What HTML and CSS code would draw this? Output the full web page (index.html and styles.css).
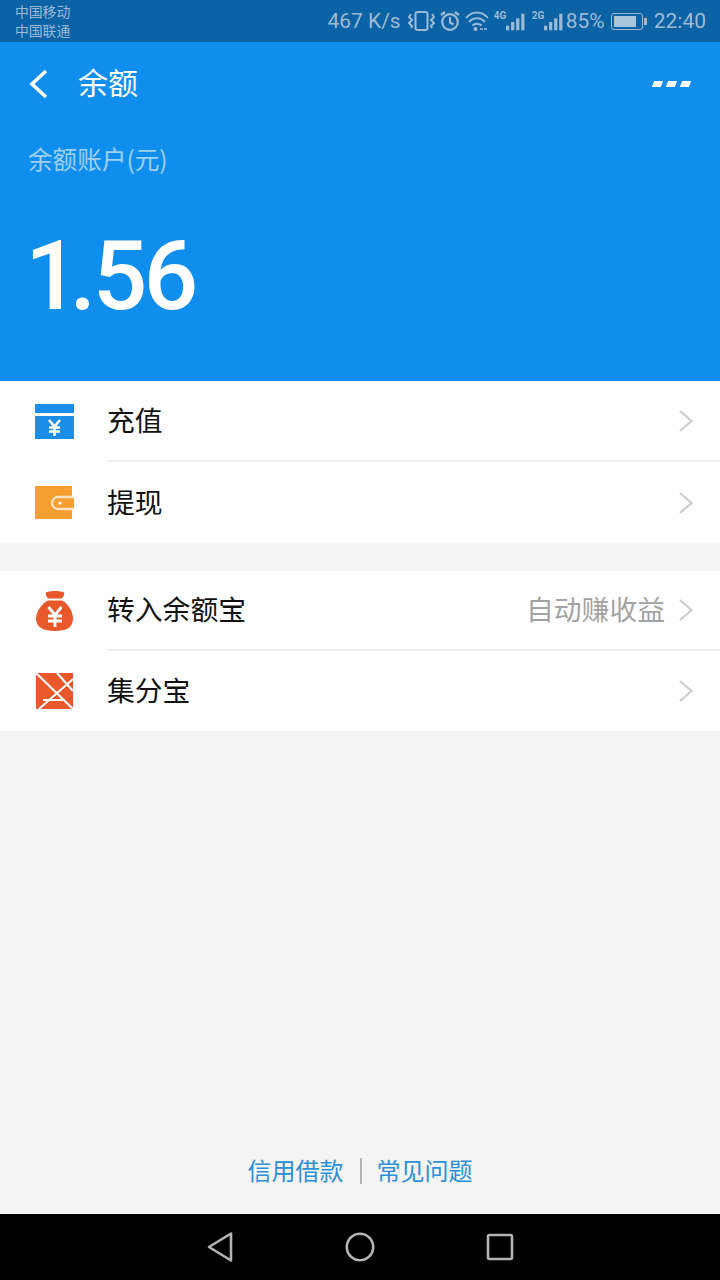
FILE: index.html
```html
<!DOCTYPE html>
<html lang="zh">
<head>
    <meta charset="UTF-8">
    <title>余额</title>
    <link rel="stylesheet" href="styles.css">
</head>
<body>
    <div class="screen">
        <div class="status-bar">
            <div class="carriers">
                <span>中国移动</span>
                <span>中国联通</span>
            </div>
            <div class="status-right">
                <span class="speed">467 K/s</span>
                <svg class="st-vibrate" width="27" height="22" viewBox="0 0 27 22" fill="none" stroke="#9dbbd6" stroke-width="2">
                    <rect x="7.500" y="2" width="12" height="18" rx="2"/>
                    <path d="M3 4L1 7l3 3-3 3 3 3-1 2M24 4l2 3-3 3 3 3-3 3 1 2"/>
                </svg>
                <svg class="st-alarm" width="22" height="22" viewBox="0 0 22 22" fill="none" stroke="#9dbbd6" stroke-width="2.200">
                    <circle cx="11" cy="12" r="7.800"/>
                    <path d="M11 7v5.500l3.500 2M2 5l4-3M20 5l-4-3"/>
                </svg>
                <svg class="st-wifi" width="24" height="22" viewBox="0 0 24 22" fill="none" stroke="#9dbbd6" stroke-width="2">
                    <path d="M1 8c6-7.500 16-7.500 22 0M4 12c4.500-5 11.500-5 16 0M7.500 15.500c2.500-2.500 6.500-2.500 9 0"/>
                    <circle cx="10.500" cy="19" r="2" fill="#9dbbd6" stroke="none"/>
                    <path d="M15 19h8" stroke-width="1.600" stroke-dasharray="3 1"/>
                </svg>
                <div class="signal first">
                    <span class="net">4G</span>
                    <svg width="20" height="18" viewBox="0 0 20 18" fill="#9dbbd6">
                        <rect x="0" y="13" width="3.500" height="5"/><rect x="5.500" y="9" width="3.500" height="9"/>
                        <rect x="11" y="5" width="3.500" height="13"/><rect x="16.500" y="0" width="3.500" height="18"/>
                    </svg>
                </div>
                <div class="signal">
                    <span class="net">2G</span>
                    <svg width="20" height="18" viewBox="0 0 20 18" fill="#9dbbd6">
                        <rect x="0" y="13" width="3.500" height="5"/><rect x="5.500" y="9" width="3.500" height="9"/>
                        <rect x="11" y="5" width="3.500" height="13"/><rect x="16.500" y="0" width="3.500" height="18"/>
                    </svg>
                </div>
                <span class="pct">85%</span>
                <div class="battery"><div class="battery-fill"></div></div>
                <div class="battery-tip"></div>
                <span class="clock">22:40</span>
            </div>
        </div>

        <div class="hero">
            <div class="top-bar">
                <svg class="back" width="20" height="30" viewBox="0 0 20 30" fill="none" stroke="#fff" stroke-width="3.600">
                    <path d="M18 2L4 15l14 13"/>
                </svg>
                <span class="title">余额</span>
                <div class="more"><i></i><i></i><i></i></div>
            </div>
            <div class="hero-label">余额账户(元)</div>
            <div class="amount"><span class="one">1</span>.56</div>
        </div>

        <div class="group">
            <div class="row">
                <div class="row-icon">
                    <svg width="42" height="36" viewBox="0 0 42 36">
                        <rect x="1" y="0" width="39" height="9" fill="#1a8ee8"/>
                        <rect x="1" y="12" width="39" height="23" fill="#1a8ee8"/>
                        <path d="M15 16l5.500 6.500L26 16M20.500 22v10M15 23.500h11M15 27.500h11" fill="none" stroke="#fff" stroke-width="2.600"/>
                    </svg>
                </div>
                <div class="row-body">
                    <span class="row-text">充值</span>
                    <svg class="chev" width="16" height="24" viewBox="0 0 16 24"><path d="M2 2l11.500 10L2 22" fill="none" stroke="#cccccc" stroke-width="2.200"/></svg>
                </div>
            </div>
            <div class="row">
                <div class="row-icon">
                    <svg width="42" height="36" viewBox="0 0 42 36">
                        <rect x="1" y="1" width="37" height="33" fill="#f59f30"/>
                        <path d="M38 12H24a6 6 0 0 0 0 12H38z" fill="#f59f30" stroke="#fde3c2" stroke-width="2.400"/>
                        <rect x="36" y="13.200" width="4" height="9.600" fill="#f59f30"/>
                        <circle cx="26" cy="18" r="1.600" fill="#fff"/>
                    </svg>
                </div>
                <div class="row-body no-line">
                    <span class="row-text">提现</span>
                    <svg class="chev" width="16" height="24" viewBox="0 0 16 24"><path d="M2 2l11.500 10L2 22" fill="none" stroke="#cccccc" stroke-width="2.200"/></svg>
                </div>
            </div>
        </div>

        <div class="group second">
            <div class="row short">
                <div class="row-icon">
                    <svg width="42" height="42" viewBox="0 0 42 42">
                        <path d="M12 2.500c4-2 14-2 18 0 1 2-1 5-2.500 6h-13C13 7.500 11 4.500 12 2.500z" fill="#e8582a"/>
                        <path d="M14 10.500h14c6 3 11 11 11 18 0 9-7 12.500-18 12.500S2 37.500 2 28.500c0-7 6-15 12-18z" fill="#e8582a"/>
                        <path d="M14.500 17l6.500 8 6.500-8M21 25v12M14 26h14M14 31h14" fill="none" stroke="#fff" stroke-width="2.800"/>
                    </svg>
                </div>
                <div class="row-body">
                    <span class="row-text">转入余额宝</span>
                    <span class="row-hint">自动赚收益</span>
                    <svg class="chev" width="16" height="24" viewBox="0 0 16 24"><path d="M2 2l11.500 10L2 22" fill="none" stroke="#cccccc" stroke-width="2.200"/></svg>
                </div>
            </div>
            <div class="row short">
                <div class="row-icon">
                    <svg width="42" height="40" viewBox="0 0 42 40">
                        <rect x="2" y="2" width="37" height="36" fill="#e8582a"/>
                        <path d="M2 2l37 36M39 8L5 38M23 2l16 18M9 29h22" fill="none" stroke="#fff" stroke-width="2"/>
                    </svg>
                </div>
                <div class="row-body no-line">
                    <span class="row-text">集分宝</span>
                    <svg class="chev" width="16" height="24" viewBox="0 0 16 24"><path d="M2 2l11.500 10L2 22" fill="none" stroke="#cccccc" stroke-width="2.200"/></svg>
                </div>
            </div>
        </div>

        <div class="spacer"></div>

        <div class="links">
            <a>信用借款</a>
            <span class="sep"></span>
            <a>常见问题</a>
        </div>

        <div class="nav-bar">
            <svg width="28" height="32" viewBox="0 0 28 32" fill="none" stroke="#b4b4b4" stroke-width="2.600" stroke-linejoin="round">
                <path d="M25 2.500v27L3 16z"/>
            </svg>
            <svg width="30" height="30" viewBox="0 0 30 30" fill="none" stroke="#b4b4b4" stroke-width="2.600">
                <circle cx="15" cy="15" r="13.200"/>
            </svg>
            <svg width="28" height="28" viewBox="0 0 28 28" fill="none" stroke="#b4b4b4" stroke-width="2.600" stroke-linejoin="round">
                <rect x="2" y="2" width="24" height="24" rx="1.500"/>
            </svg>
        </div>
    </div>
</body>
</html>
```
FILE: styles.css
```css
* {
    box-sizing: border-box;
}
html, body {
    margin: 0;
    padding: 0;
}
body {
    font-family: "Noto Sans CJK SC", "Noto Sans", sans-serif;
    background-color: #f4f4f4;
}
.screen {
    width: 720px;
    height: 1280px;
    display: flex;
    flex-direction: column;
    overflow: hidden;
}

/* status bar */
.status-bar {
    height: 42px;
    background: #0b62a5;
    display: flex;
    justify-content: space-between;
    align-items: center;
    padding: 0 14px 0 15px;
    color: #9dbbd6;
}
.carriers {
    display: flex;
    flex-direction: column;
    font-size: 13.800px;
    line-height: 19px;
}
.status-right {
    display: flex;
    align-items: center;
    font-family: Roboto, sans-serif;
    font-size: 21px;
}
.st-vibrate {
    margin-left: 7px;
}
.st-alarm, .st-wifi {
    margin-left: 4px;
}
.signal {
    display: flex;
    width: 31px;
    height: 20px;
    margin-left: 7px;
    align-items: flex-end;
    justify-content: space-between;
}
.signal.first {
    margin-left: 5px;
}
.net {
    font-size: 10px;
    font-weight: 700;
    line-height: 10px;
    align-self: flex-start;
}
.pct {
    margin-left: 3px;
}
.battery {
    width: 32px;
    height: 17px;
    margin-left: 6px;
    border: 1.500px solid #9dbbd6;
    border-radius: 3px;
    padding: 2px;
}
.battery-fill {
    width: 85%;
    height: 100%;
    background: #a9c5dc;
}
.battery-tip {
    width: 3px;
    height: 7px;
    margin-left: 1px;
    background: #9dbbd6;
}
.clock {
    margin-left: 7px;
}

/* blue header */
.hero {
    height: 339px;
    background: #108eed;
    color: #fff;
    padding-left: 28px;
}
.top-bar {
    height: 84px;
    display: flex;
    align-items: center;
    padding-right: 30px;
}
.title {
    font-size: 30px;
    line-height: 36px;
    margin-left: 30px;
    padding-bottom: 6px;
    flex: 1;
}
.more {
    display: flex;
    gap: 5px;
}
.more i {
    width: 9px;
    height: 6px;
    background: #fff;
    transform: skewX(-20deg);
}
.hero-label {
    font-size: 24.600px;
    line-height: 32px;
    margin-top: 16px;
    color: #9fd0f6;
}
.amount {
    font-family: Roboto, sans-serif;
    font-size: 96px;
    font-weight: 500;
    line-height: 110px;
    letter-spacing: -3.500px;
    margin-top: 47px;
    margin-left: -3px;
}
.one {
    letter-spacing: -10px;
}

/* list rows */
.group {
    background: #fff;
}
.second {
    margin-top: 28px;
}
.row {
    height: 81px;
    display: flex;
    align-items: center;
}
.row.short {
    height: 80px;
}
.row-icon {
    width: 107px;
    padding-left: 34px;
    display: flex;
    align-items: center;
}
.row-body {
    flex: 1;
    height: 100%;
    display: flex;
    align-items: center;
    padding-right: 26px;
    border-bottom: 2px solid #eeeeee;
}
.no-line {
    border-bottom: none;
}
.row-text {
    font-size: 27.800px;
    line-height: 40px;
    padding-bottom: 4px;
    color: #111;
    flex: 1;
}
.row-hint {
    font-size: 27.800px;
    line-height: 40px;
    padding-bottom: 4px;
    color: #a3a3a3;
    margin-right: 13px;
}

.spacer {
    flex: 1;
}

/* bottom links */
.links {
    height: 84px;
    display: flex;
    align-items: center;
    justify-content: center;
    font-size: 24px;
    color: #2c8fd8;
    padding-bottom: 6px;
}
.sep {
    width: 2px;
    height: 26px;
    background: #b5b5b5;
    margin: 4px 15px 0 16px;
}

/* android nav */
.nav-bar {
    height: 66px;
    background: #000;
    display: flex;
    align-items: center;
    justify-content: center;
    gap: 111px;
}
```
